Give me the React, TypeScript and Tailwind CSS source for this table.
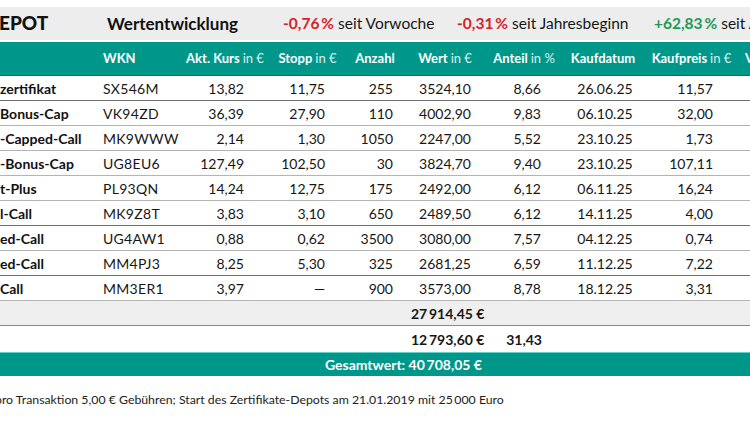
import React from "react";

type Row = {
  name: string;
  wkn: string;
  kurs: string;
  stopp: string;
  anzahl: string;
  wert: string;
  anteil: string;
  datum: string;
  preis: string;
  dark?: boolean;
};

const rows: Row[] = [
  { name: "zertifikat", wkn: "SX546M", kurs: "13,82", stopp: "11,75", anzahl: "255", wert: "3524,10", anteil: "8,66", datum: "26.06.25", preis: "11,57", dark: true },
  { name: "Bonus-Cap", wkn: "VK94ZD", kurs: "36,39", stopp: "27,90", anzahl: "110", wert: "4002,90", anteil: "9,83", datum: "06.10.25", preis: "32,00" },
  { name: "-Capped-Call", wkn: "MK9WWW", kurs: "2,14", stopp: "1,30", anzahl: "1050", wert: "2247,00", anteil: "5,52", datum: "23.10.25", preis: "1,73" },
  { name: "-Bonus-Cap", wkn: "UG8EU6", kurs: "127,49", stopp: "102,50", anzahl: "30", wert: "3824,70", anteil: "9,40", datum: "23.10.25", preis: "107,11" },
  { name: "t-Plus", wkn: "PL93QN", kurs: "14,24", stopp: "12,75", anzahl: "175", wert: "2492,00", anteil: "6,12", datum: "06.11.25", preis: "16,24" },
  { name: "l-Call", wkn: "MK9Z8T", kurs: "3,83", stopp: "3,10", anzahl: "650", wert: "2489,50", anteil: "6,12", datum: "14.11.25", preis: "4,00", dark: true },
  { name: "ed-Call", wkn: "UG4AW1", kurs: "0,88", stopp: "0,62", anzahl: "3500", wert: "3080,00", anteil: "7,57", datum: "04.12.25", preis: "0,74" },
  { name: "ed-Call", wkn: "MM4PJ3", kurs: "8,25", stopp: "5,30", anzahl: "325", wert: "2681,25", anteil: "6,59", datum: "11.12.25", preis: "7,22", dark: true },
  { name: "Call", wkn: "MM3ER1", kurs: "3,97", stopp: "—", anzahl: "900", wert: "3573,00", anteil: "8,78", datum: "18.12.25", preis: "3,31" },
];

// fixed column widths so header and values line up like the print table
const cols = "grid grid-cols-[100px_80px_90px_75px_60px_80px_78px_80px_97px_10px]";

function Head({ b, r }: { b: string; r?: string }) {
  return (
    <div className="flex items-center justify-center whitespace-nowrap">
      <span className="font-bold">{b}</span>
      {r && <span className="ml-[3px] font-normal text-white/85">{r}</span>}
    </div>
  );
}

export default function App() {
  return (
    <div className="w-[750px] h-[421px] overflow-hidden bg-white pt-[7px] text-[#161616]" style={{ fontFamily: "Lato, 'Noto Sans', sans-serif" }}>
      {/* title bar */}
      <div className="h-[33px] bg-[#ededed] flex items-center whitespace-nowrap">
        <div className="w-[108px] shrink-0 text-[19px] font-black text-[#111] ml-[-1px]">EPOT</div>
        <div className="w-[176px] shrink-0 text-[17px] font-bold text-[#111]">Wertentwicklung</div>
        <div className="w-[174px] shrink-0 text-[15.5px]">
          <span className="font-bold text-[#d3222c]">-0,76{"\u2009"}%</span> seit Vorwoche
        </div>
        <div className="w-[197px] shrink-0 text-[15.5px]">
          <span className="font-bold text-[#d3222c]">-0,31{"\u2009"}%</span> seit Jahresbeginn
        </div>
        <div className="shrink-0 text-[15.5px]">
          <span className="font-bold text-[#1e9a52]">+62,83{"\u2009"}%</span> seit Auflage
        </div>
      </div>

      {/* table header */}
      <div className={`${cols} mt-[2px] h-[34px] bg-[#00978b] text-white text-[13px] border-b border-[#0a6f66]`}>
        <div />
        <div className="flex items-center pl-[3px] font-bold">WKN</div>
        <Head b="Akt. Kurs" r="in €" />
        <Head b="Stopp" r="in €" />
        <Head b="Anzahl" />
        <Head b="Wert" r="in €" />
        <Head b="Anteil" r="in %" />
        <Head b="Kaufdatum" />
        <Head b="Kaufpreis" r="in €" />
        <div className="flex items-center pl-[5px] font-bold">V</div>
      </div>

      {/* rows */}
      {rows.map((r, i) => (
        <div
          key={i}
          className={`${cols} h-[25px] text-[14px] border-b ${r.dark ? "border-[#6f6f6f]" : "border-[#b4b4b4]"}`}
        >
          <div className="flex items-center font-bold text-[#111] whitespace-nowrap">{r.name}</div>
          <div className="flex items-center pl-[3px] tracking-[0.3px]">{r.wkn}</div>
          <div className="flex items-center justify-end pr-[26px]">{r.kurs}</div>
          <div className="flex items-center justify-end pr-[20px]">{r.stopp}</div>
          <div className="flex items-center justify-end pr-[12px]">{r.anzahl}</div>
          <div className="flex items-center justify-end pr-[14px]">{r.wert}</div>
          <div className="flex items-center justify-end pr-[22px]">{r.anteil}</div>
          <div className="flex items-center justify-center pl-[4px]">{r.datum}</div>
          <div className="flex items-center justify-end pr-[27px]">{r.preis}</div>
          <div />
        </div>
      ))}

      {/* totals */}
      <div className={`${cols} h-[25px] bg-[#efefef] text-[14px] font-bold border-b border-[#8a8a8a]`}>
        <div />
        <div />
        <div />
        <div />
        <div />
        <div className="flex items-center pl-[6px] whitespace-nowrap">27{"\u2009"}914,45 €</div>
        <div />
        <div />
        <div />
        <div />
      </div>
      <div className={`${cols} h-[26px] text-[14px] font-bold`}>
        <div />
        <div />
        <div />
        <div />
        <div />
        <div className="flex items-center pl-[6px] whitespace-nowrap">12{"\u2009"}793,60 €</div>
        <div className="flex items-center justify-end pr-[21px]">31,43</div>
        <div />
        <div />
        <div />
      </div>

      {/* grand total */}
      <div className="h-[24px] bg-[#00978b] border-t border-[#5fd3c8] flex items-center justify-end pr-[268px] text-white text-[14px] font-bold whitespace-nowrap">
        Gesamtwert: 40{"\u2009"}708,05 €
      </div>

      {/* footnote */}
      <div className="mt-[15px] ml-[-5px] text-[12.3px] text-[#222] whitespace-nowrap">
        pro Transaktion 5,00 € Gebühren; Start des Zertifikate-Depots am 21.01.2019 mit 25{"\u2009"}000 Euro
      </div>
    </div>
  );
}
